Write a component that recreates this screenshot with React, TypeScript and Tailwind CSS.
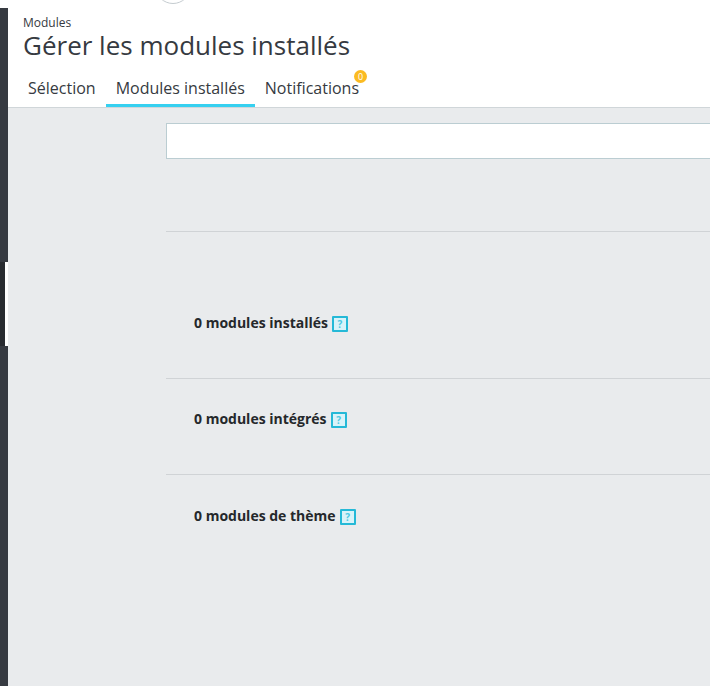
import React from "react";

function Help() {
  return (
    <span className="ml-[4px] mt-[1px] inline-flex h-[16px] w-[16px] items-center justify-center rounded-[1px] border-2 border-[#25b9d7] bg-[#d9f3f9] text-[10px] font-bold leading-none text-[#4fc9e2]">
      ?
    </span>
  );
}

function Section({ label, height, pt, border = true }: { label: string; height: string; pt: string; border?: boolean }) {
  return (
    <div className={`${height} ${pt} ${border ? "border-b border-[#d0d3d6]" : ""} pl-[28px]`}>
      <div className="flex items-center text-[14px] font-bold leading-[20px] text-[#25282b]">
        <span>{label}</span>
        <Help />
      </div>
    </div>
  );
}

export default function App() {
  return (
    <div className="relative h-[686px] w-[710px] overflow-hidden bg-white font-['Open_Sans',sans-serif]">
      <div className="absolute left-[155px] top-[-32px] h-[36px] w-[36px] rounded-full border border-[#c5ccd0] bg-white" />
      <div className="flex h-full pt-2">
        <aside className="relative w-2 shrink-0 bg-[#363a41]">
          <div className="absolute left-0 top-[254px] h-[84px] w-2 border-r-[3px] border-white bg-[#282b30]" />
        </aside>
        <div className="flex min-w-0 flex-1 flex-col">
          <header className="h-[100px] shrink-0 border-b border-[#d0d6d9] bg-white pl-[15px] pt-[8px]">
            <div className="text-[12px] leading-[13px] text-[#363a41]">Modules</div>
            <h1 className="text-[26px] font-normal leading-[32px] text-[#363a41]">Gérer les modules installés</h1>
            <nav className="mt-[13px] flex text-[16px] leading-[22px] text-[#363a41]">
              <a className="px-[5px] pt-[3px]">Sélection</a>
              <a className="ml-[5px] border-b-[3px] border-[#36d0f0] px-[10px] pb-[5px] pt-[3px]">Modules installés</a>
              <a className="relative px-[10px] pt-[3px]">
                Notifications
                <span className="absolute right-[2px] top-[-4px] flex h-[13px] w-[13px] items-center justify-center rounded-full bg-[#fbbb22] text-[9px] leading-none text-white">
                  0
                </span>
              </a>
            </nav>
          </header>
          <main className="flex-1 bg-[#e9ebed] pl-[158px] pt-[15px]">
            <div className="h-[36px] border border-r-0 border-[#bbcdd2] bg-white" />
            <div className="h-[73px] border-b border-[#d0d3d6]" />
            <Section label="0 modules installés" height="h-[147px]" pt="pt-[81px]" />
            <Section label="0 modules intégrés" height="h-[96px]" pt="pt-[30px]" />
            <Section label="0 modules de thème" height="h-[96px]" pt="pt-[31px]" border={false} />
          </main>
        </div>
      </div>
    </div>
  );
}
